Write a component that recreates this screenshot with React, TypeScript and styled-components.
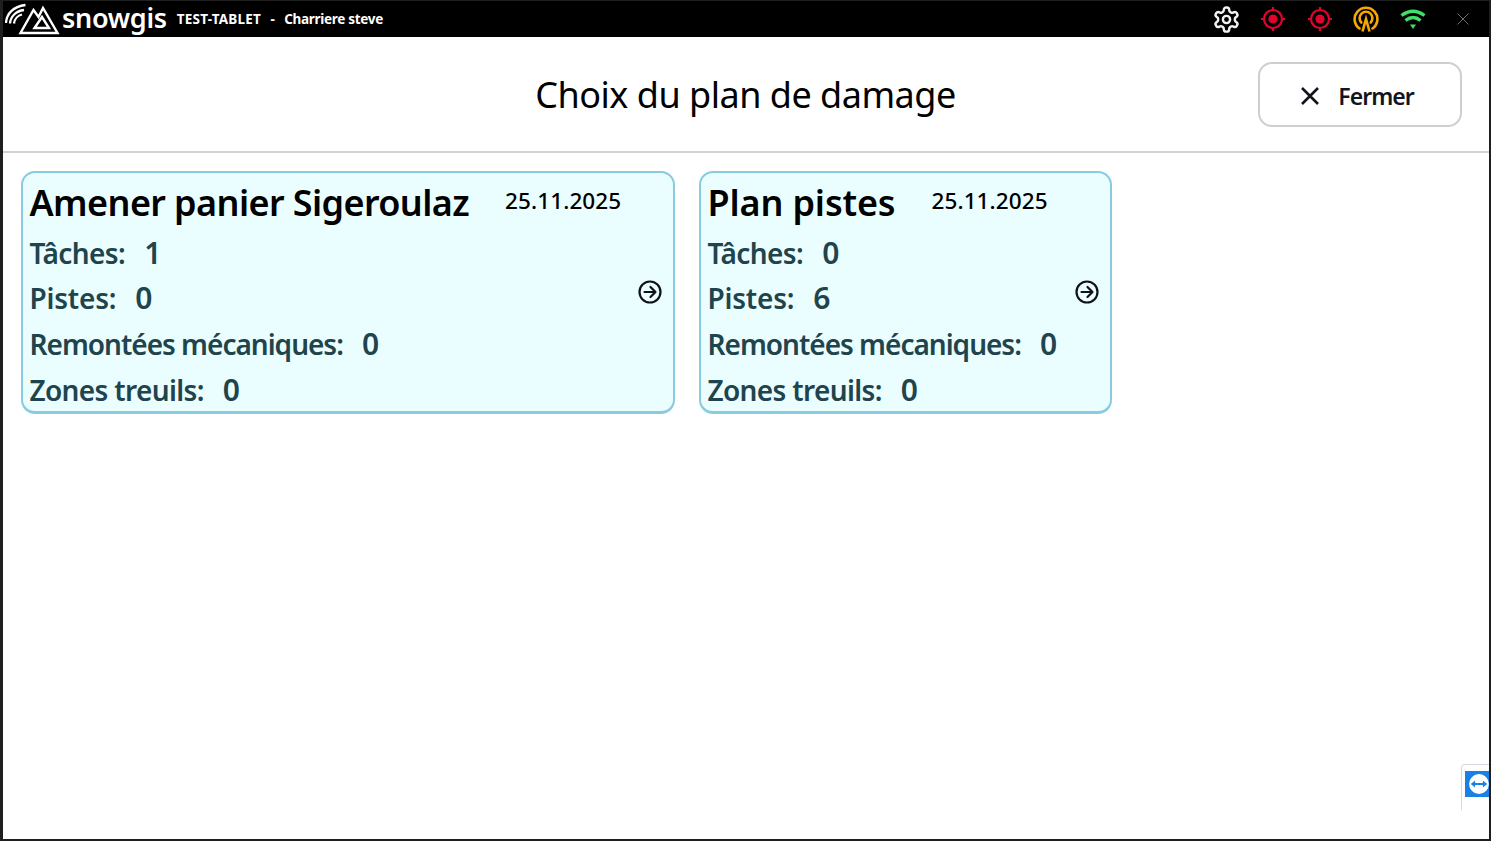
import React from 'react';
import styled, { createGlobalStyle } from 'styled-components';

const GlobalStyle = createGlobalStyle`
  html, body {
    margin: 0;
    padding: 0;
    height: 100%;
    background: #fff;
    overflow: hidden;
  }
  #root {
    height: 100%;
  }
`;

interface Plan {
  name: string;
  date: string;
  taches: number;
  pistes: number;
  remontees: number;
  treuils: number;
  width: number;
  nameTracking: number;
}

const plans: Plan[] = [
  { name: 'Amener panier Sigeroulaz', date: '25.11.2025', taches: 1, pistes: 0, remontees: 0, treuils: 0, width: 654, nameTracking: -0.6 },
  { name: 'Plan pistes', date: '25.11.2025', taches: 0, pistes: 6, remontees: 0, treuils: 0, width: 413, nameTracking: -0.15 },
];

const LogoMark = () => (
  <svg width="56" height="34" viewBox="0 0 56 34" fill="none" stroke="#fff" strokeLinejoin="miter">
    <path d="M1 21 C1.5 12 8 4.5 20.5 3" strokeWidth="2.3" />
    <path d="M5 21.5 C5.5 14.5 11 9 19 8" strokeWidth="2.3" />
    <path d="M9 21.5 C9.5 17 13 13.5 17 12.5" strokeWidth="2.3" />
    <path d="M15.5 31 L28.5 8 L33.5 15 L38 6 L52.5 31 Z" strokeWidth="2.4" />
    <path d="M29.5 26 L37 15 L44 26 Z" strokeWidth="2.4" />
  </svg>
);

const GearIcon = () => (
  <svg width="29" height="29" viewBox="0 0 24 24" fill="none" stroke="#f2f2f2" strokeWidth="2" strokeLinecap="round" strokeLinejoin="round">
    <path d="M12.22 2h-.44a2 2 0 0 0-2 2v.18a2 2 0 0 1-1 1.73l-.43.25a2 2 0 0 1-2 0l-.15-.08a2 2 0 0 0-2.73.73l-.22.38a2 2 0 0 0 .73 2.73l.15.1a2 2 0 0 1 1 1.72v.51a2 2 0 0 1-1 1.74l-.15.09a2 2 0 0 0-.73 2.73l.22.38a2 2 0 0 0 2.73.73l.15-.08a2 2 0 0 1 2 0l.43.25a2 2 0 0 1 1 1.73V20a2 2 0 0 0 2 2h.44a2 2 0 0 0 2-2v-.18a2 2 0 0 1 1-1.73l.43-.25a2 2 0 0 1 2 0l.15.08a2 2 0 0 0 2.73-.73l.22-.39a2 2 0 0 0-.73-2.73l-.15-.08a2 2 0 0 1-1-1.74v-.5a2 2 0 0 1 1-1.74l.15-.09a2 2 0 0 0 .73-2.73l-.22-.38a2 2 0 0 0-2.73-.73l-.15.08a2 2 0 0 1-2 0l-.43-.25a2 2 0 0 1-1-1.73V4a2 2 0 0 0-2-2z" />
    <circle cx="12" cy="12" r="3" />
  </svg>
);

const TargetIcon = () => (
  <svg width="26" height="26" viewBox="0 0 26 26" fill="none" stroke="#e0032c" strokeWidth="2.2">
    <circle cx="13" cy="13" r="9" />
    <circle cx="13" cy="13" r="4.6" fill="#e0032c" stroke="none" />
    <path d="M13 1v3M13 22v3M1 13h3M22 13h3" />
  </svg>
);

const BroadcastIcon = () => (
  <svg width="26" height="26" viewBox="0 0 26 26" fill="none" stroke="#f6a800" strokeWidth="2.6" strokeLinecap="round">
    <path d="M6.5 22.5 A11.4 11.4 0 1 1 19.5 22.5" />
    <path d="M8.3 16.5 A6.4 6.4 0 1 1 17.7 16.5" />
    <path d="M9.5 25.5 L13 13 L16.5 25.5" strokeLinecap="butt" />
  </svg>
);

const WifiIcon = () => (
  <svg width="26" height="26" viewBox="0 0 26 26" fill="none" stroke="#3ee06a" strokeWidth="3.4">
    <path d="M1.5 9.5 Q13 1 24.5 9.5" />
    <path d="M5.5 14.5 Q13 8.5 20.5 14.5" />
    <path d="M10 18.5 H16 L13 23 Z" fill="#3ee06a" stroke="none" />
  </svg>
);

const ThinClose = () => (
  <svg width="12" height="12" viewBox="0 0 12 12" stroke="#6d6d6d" strokeWidth="1">
    <path d="M0.5 0.5 L11.5 11.5 M11.5 0.5 L0.5 11.5" />
  </svg>
);

const CloseIcon = () => (
  <svg width="20" height="20" viewBox="0 0 20 20" stroke="#14141f" strokeWidth="2.6">
    <path d="M2 2 L18 18 M18 2 L2 18" />
  </svg>
);

const ArrowCircle = () => (
  <svg width="24" height="24" viewBox="0 0 24 24" fill="none" stroke="#11111c" strokeWidth="2.2" strokeLinecap="round" strokeLinejoin="round">
    <circle cx="12" cy="12" r="10.5" />
    <path d="M6.5 12h11M12.5 7l5 5-5 5" />
  </svg>
);

const App: React.FC = () => {
  return (
    <Frame>
      <GlobalStyle />
      <TitleBar>
        <Brand>
          <LogoMark />
          <BrandName>snowgis</BrandName>
          <SessionText $tracking={0.2}>TEST-TABLET</SessionText>
          <SessionDash>-</SessionDash>
          <SessionText $tracking={-0.3}>Charriere steve</SessionText>
        </Brand>
        <StatusIcons>
          <IconSlot><GearIcon /></IconSlot>
          <IconSlot><TargetIcon /></IconSlot>
          <IconSlot><TargetIcon /></IconSlot>
          <IconSlot><BroadcastIcon /></IconSlot>
          <IconSlot><WifiIcon /></IconSlot>
          <WindowClose>
            <ThinClose />
          </WindowClose>
        </StatusIcons>
      </TitleBar>
      <Header>
        <Heading>Choix du plan de damage</Heading>
        <CloseButton>
          <CloseIcon />
          Fermer
        </CloseButton>
      </Header>
      <CardList>
        {plans.map((plan) => (
          <Card key={plan.name} $width={plan.width}>
            <CardTop>
              <CardName $tracking={plan.nameTracking}>{plan.name}</CardName>
              <CardDate>{plan.date}</CardDate>
            </CardTop>
            <CardRow $tracking={-0.6}>Tâches:<Count>{plan.taches}</Count></CardRow>
            <CardRow $tracking={-0.2}>Pistes:<Count>{plan.pistes}</Count></CardRow>
            <CardRow $tracking={-1}>Remontées mécaniques:<Count>{plan.remontees}</Count></CardRow>
            <CardRow $tracking={-0.65}>Zones treuils:<Count>{plan.treuils}</Count></CardRow>
            <CardArrow>
              <ArrowCircle />
            </CardArrow>
          </Card>
        ))}
      </CardList>
      <RemoteTab>
        <RemoteBadge>
          <svg width="22" height="22" viewBox="0 0 20 20">
            <circle cx="10" cy="10" r="9" fill="#fff" />
            <path d="M2.5 10 L6.5 6.8 V9 H13.5 V6.8 L17.5 10 L13.5 13.2 V11 H6.5 V13.2 Z" fill="#1a80e5" />
          </svg>
        </RemoteBadge>
      </RemoteTab>
    </Frame>
  );
};

const Frame = styled.div`
  position: relative;
  box-sizing: border-box;
  width: 1491px;
  height: 841px;
  border-style: solid;
  border-color: #1f1f1f;
  border-width: 1px 2px 2px 3px;
  background: #fff;
  font-family: 'Noto Sans', sans-serif;
  overflow: hidden;
`;

const TitleBar = styled.div`
  height: 36px;
  background: #000;
  display: flex;
  align-items: center;
  justify-content: space-between;
  padding: 0 20px 0 2px;
`;

const Brand = styled.div`
  display: flex;
  align-items: center;
  color: #fff;
`;

const BrandName = styled.span`
  font-size: 27px;
  font-weight: 600;
  letter-spacing: -0.3px;
  line-height: 32px;
  margin: -2px 10px 0 1px;
`;

const SessionText = styled.span<{ $tracking: number }>`
  font-size: 13.5px;
  font-weight: 700;
  letter-spacing: ${(props) => props.$tracking}px;
`;

const SessionDash = styled.span`
  font-size: 13.5px;
  font-weight: 700;
  margin: 0 9.5px;
`;

const StatusIcons = styled.div`
  display: flex;
  align-items: center;
  gap: 20.5px;
`;

const IconSlot = styled.span`
  display: flex;
  justify-content: center;
  width: 26px;

  svg {
    flex-shrink: 0;
  }
`;

const WindowClose = styled.span`
  display: flex;
  margin-left: 11px;
`;

const Header = styled.div`
  position: relative;
  height: 114px;
  display: flex;
  align-items: center;
  justify-content: center;
  border-bottom: 2px solid #d2d2d2;
`;

const Heading = styled.h1`
  margin: 0 0 -1px -1px;
  font-size: 36px;
  font-weight: 400;
  letter-spacing: -0.5px;
  color: #000;
`;

const CloseButton = styled.button`
  position: absolute;
  right: 27px;
  top: 25px;
  box-sizing: border-box;
  width: 204px;
  height: 65px;
  display: flex;
  align-items: center;
  justify-content: center;
  gap: 18px;
  background: #fff;
  border: 2px solid #cfcfcf;
  border-radius: 14px;
  font-family: inherit;
  font-size: 23px;
  font-weight: 600;
  letter-spacing: -1px;
  color: #14141f;
  padding: 2px 6px 0 0;
`;

const CardList = styled.div`
  display: flex;
  align-items: flex-start;
  gap: 24px;
  padding: 18px 0 0 18px;
`;

const Card = styled.div<{ $width: number }>`
  position: relative;
  box-sizing: border-box;
  width: ${(props) => props.$width}px;
  height: 243px;
  padding: 4px 6.5px 0;
  background: #ebfeff;
  border: 2px solid #8acbdf;
  border-bottom-width: 3px;
  border-radius: 14px;
`;

const CardTop = styled.div`
  display: flex;
  align-items: center;
  gap: 36px;
  height: 50px;
  margin-bottom: 2.5px;
`;

const CardName = styled.span<{ $tracking: number }>`
  font-size: 36px;
  font-weight: 600;
  letter-spacing: ${(props) => props.$tracking}px;
  color: #000;
`;

const CardDate = styled.span`
  font-size: 22.5px;
  font-weight: 500;
  letter-spacing: 0.1px;
  color: #000;
  margin-top: -3px;
`;

const CardRow = styled.div<{ $tracking: number }>`
  height: 45.7px;
  line-height: 45.7px;
  font-size: 28px;
  font-weight: 600;
  letter-spacing: ${(props) => props.$tracking}px;
  color: #1f444c;
`;

const Count = styled.span`
  margin-left: 19px;
  font-size: 30px;
  letter-spacing: 0;
`;

const CardArrow = styled.div`
  position: absolute;
  right: 11px;
  top: 107px;
  display: flex;
`;

const RemoteTab = styled.div`
  position: absolute;
  right: -2px;
  top: 763px;
  box-sizing: border-box;
  width: 30px;
  height: 46px;
  padding: 6px 0 0 3px;
  background: #fff;
  border-top: 1px solid #d8d8e0;
  border-left: 1px solid #d8d8e0;
  border-radius: 4px 0 0 0;
`;

const RemoteBadge = styled.div`
  width: 27px;
  height: 26px;
  background: #1a80e5;
  display: flex;
  align-items: center;
  justify-content: center;
`;

export default App;
